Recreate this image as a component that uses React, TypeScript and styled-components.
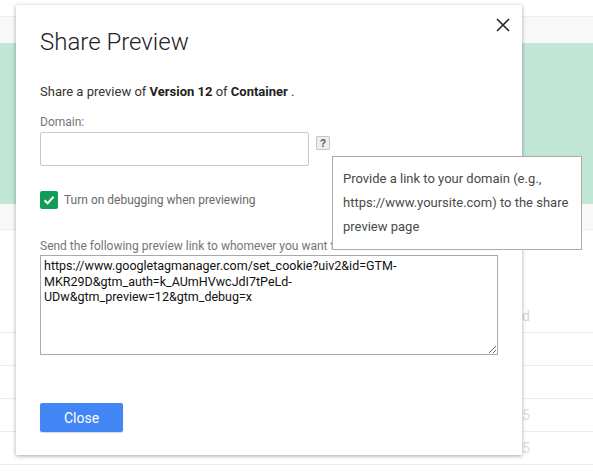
import React from "react";
import styled, { createGlobalStyle } from "styled-components";

const Global = createGlobalStyle`
  html, body { margin: 0; padding: 0; background: #fff; }
  body { font-family: Roboto, "Noto Sans", Arial, sans-serif; overflow: hidden; }
  * { box-sizing: border-box; }
`;

const Page = styled.div`
  position: relative;
  width: 593px;
  height: 473px;
  overflow: hidden;
  display: flex;
  flex-direction: column;
`;

const Band = styled.div<{ $h: number; $bg: string; $line?: boolean }>`
  flex: none;
  height: ${(p) => p.$h}px;
  background: ${(p) => p.$bg};
  border-bottom: ${(p) => (p.$line ? "1px solid #eeeeee" : "none")};
`;

const Row = styled.div<{ $h: number }>`
  flex: none;
  height: ${(p) => p.$h}px;
  border-bottom: 1px solid #eeeeee;
  display: flex;
  align-items: flex-end;
  justify-content: flex-end;
  padding: 0 63px 8px 0;
  color: #dcdcdc;
  font-size: 14px;
`;

const RowText = styled.span<{ $color?: string }>`
  color: ${(p) => p.$color || "#d6d6d6"};
`;

const Dialog = styled.div`
  position: absolute;
  left: 16px;
  top: 5px;
  width: 506px;
  height: 450px;
  background: #fff;
  box-shadow: 0 1px 4px rgba(0, 0, 0, 0.35);
  padding: 21px 24px 0 24px;
  display: flex;
  flex-direction: column;
`;

const CloseX = styled.button`
  position: absolute;
  top: 8px;
  right: 7px;
  width: 24px;
  height: 24px;
  padding: 0;
  border: none;
  background: transparent;
  display: flex;
  align-items: center;
  justify-content: center;
`;

const Title = styled.h1`
  margin: 0;
  font-family: Roboto, sans-serif;
  font-weight: 300;
  font-size: 24px;
  line-height: 32px;
  color: #212121;
`;

const Intro = styled.p`
  margin: 25px 0 0 0;
  font-size: 13px;
  line-height: 18px;
  color: #333;
  b { font-weight: 700; color: #222; }
`;

const Label = styled.div<{ $mt: number }>`
  margin-top: ${(p) => p.$mt}px;
  font-size: 12px;
  line-height: 14px;
  color: #757575;
`;

const DomainRow = styled.div`
  margin-top: 3px;
  display: flex;
  align-items: flex-start;
  gap: 7px;
`;

const Input = styled.input`
  width: 269px;
  height: 34px;
  border: 1px solid #c8c8c8;
  border-radius: 2px;
  outline: none;
  padding: 0 6px;
  font-family: Roboto, sans-serif;
  font-size: 13px;
`;

const Help = styled.span`
  margin-top: 4px;
  width: 14px;
  height: 14px;
  border: 1px solid #c6c6c6;
  background: #eeeeee;
  border-radius: 1px;
  display: flex;
  align-items: center;
  justify-content: center;
  font-family: Arial, "Liberation Sans", sans-serif;
  font-weight: 700;
  font-size: 10px;
  color: #555;
`;

const Tooltip = styled.div`
  position: absolute;
  left: 316px;
  top: 151px;
  width: 250px;
  height: 94px;
  background: #fff;
  border: 1px solid #aaaaaa;
  padding: 10px 10px 0 10px;
  font-size: 13px;
  line-height: 24px;
  color: #4a4a4a;
  z-index: 2;
`;

const CheckRow = styled.label`
  margin-top: 25px;
  display: flex;
  align-items: center;
  gap: 6px;
  font-size: 12px;
  color: #6a6a6a;
`;

const Box = styled.span`
  width: 18px;
  height: 18px;
  border-radius: 2px;
  background: #0f9d58;
  display: flex;
  align-items: center;
  justify-content: center;
`;

const LinkArea = styled.textarea`
  margin-top: 2px;
  width: 458px;
  height: 100px;
  border: 1px solid #a9a9a9;
  padding: 2px 3px;
  font-family: Roboto, sans-serif;
  font-size: 12.5px;
  color: #111;
  resize: both;
  outline: none;
  line-height: 15.5px;
`;

const Footer = styled.div`
  margin-top: 48px;
  display: flex;
`;

const Button = styled.button`
  width: 83px;
  height: 29px;
  background: #4285f4;
  color: #fff;
  border: none;
  border-radius: 2px;
  box-shadow: 0 1px 1px rgba(0, 0, 0, 0.15);
  font-family: Roboto, sans-serif;
  font-size: 14px;
  padding: 0;
`;

const url =
  "https://www.googletagmanager.com/set_cookie?uiv2&id=GTM-MKR29D&gtm_auth=k_AUmHVwcJdI7tPeLd-UDw&gtm_preview=12&gtm_debug=x";

export default function App() {
  return (
    <>
      <Global />
      <Page>
        <Band $h={17} $bg="#ffffff" $line />
        <Band $h={26} $bg="#f8f8f8" />
        <Band $h={161} $bg="#c2e6d5" />
        <Band $h={26} $bg="#f8f8f8" $line />
        <Row $h={103}>
          <RowText>d</RowText>
        </Row>
        <Row $h={33} />
        <Row $h={33} />
        <Row $h={33}>
          <RowText $color="#d3e6de">15</RowText>
        </Row>
        <Row $h={33}>
          <RowText $color="#d3e6de">15</RowText>
        </Row>
        <Row $h={33} />

        <Dialog>
          <CloseX aria-label="Close">
            <svg width="14" height="14" viewBox="0 0 14 14">
              <path d="M1 1 L13 13 M13 1 L1 13" stroke="#222" strokeWidth="1.6" fill="none" />
            </svg>
          </CloseX>
          <Title>Share Preview</Title>
          <Intro>
            Share a preview of <b>Version 12</b> of <b>Container</b> .
          </Intro>
          <Label $mt={14}>Domain:</Label>
          <DomainRow>
            <Input />
            <Help>?</Help>
          </DomainRow>
          <CheckRow>
            <Box>
              <svg width="14" height="14" viewBox="0 0 14 14">
                <path d="M2.5 7.2 L5.6 10.2 L11.6 3.8" stroke="#fff" strokeWidth="2" fill="none" />
              </svg>
            </Box>
            Turn on debugging when previewing
          </CheckRow>
          <Label $mt={30}>Send the following preview link to whomever you want to:</Label>
          <LinkArea readOnly value={url} />
          <Footer>
            <Button>Close</Button>
          </Footer>
          <Tooltip>
            Provide a link to your domain (e.g., https://www.yoursite.com) to the share preview page
          </Tooltip>
        </Dialog>
      </Page>
    </>
  );
}
